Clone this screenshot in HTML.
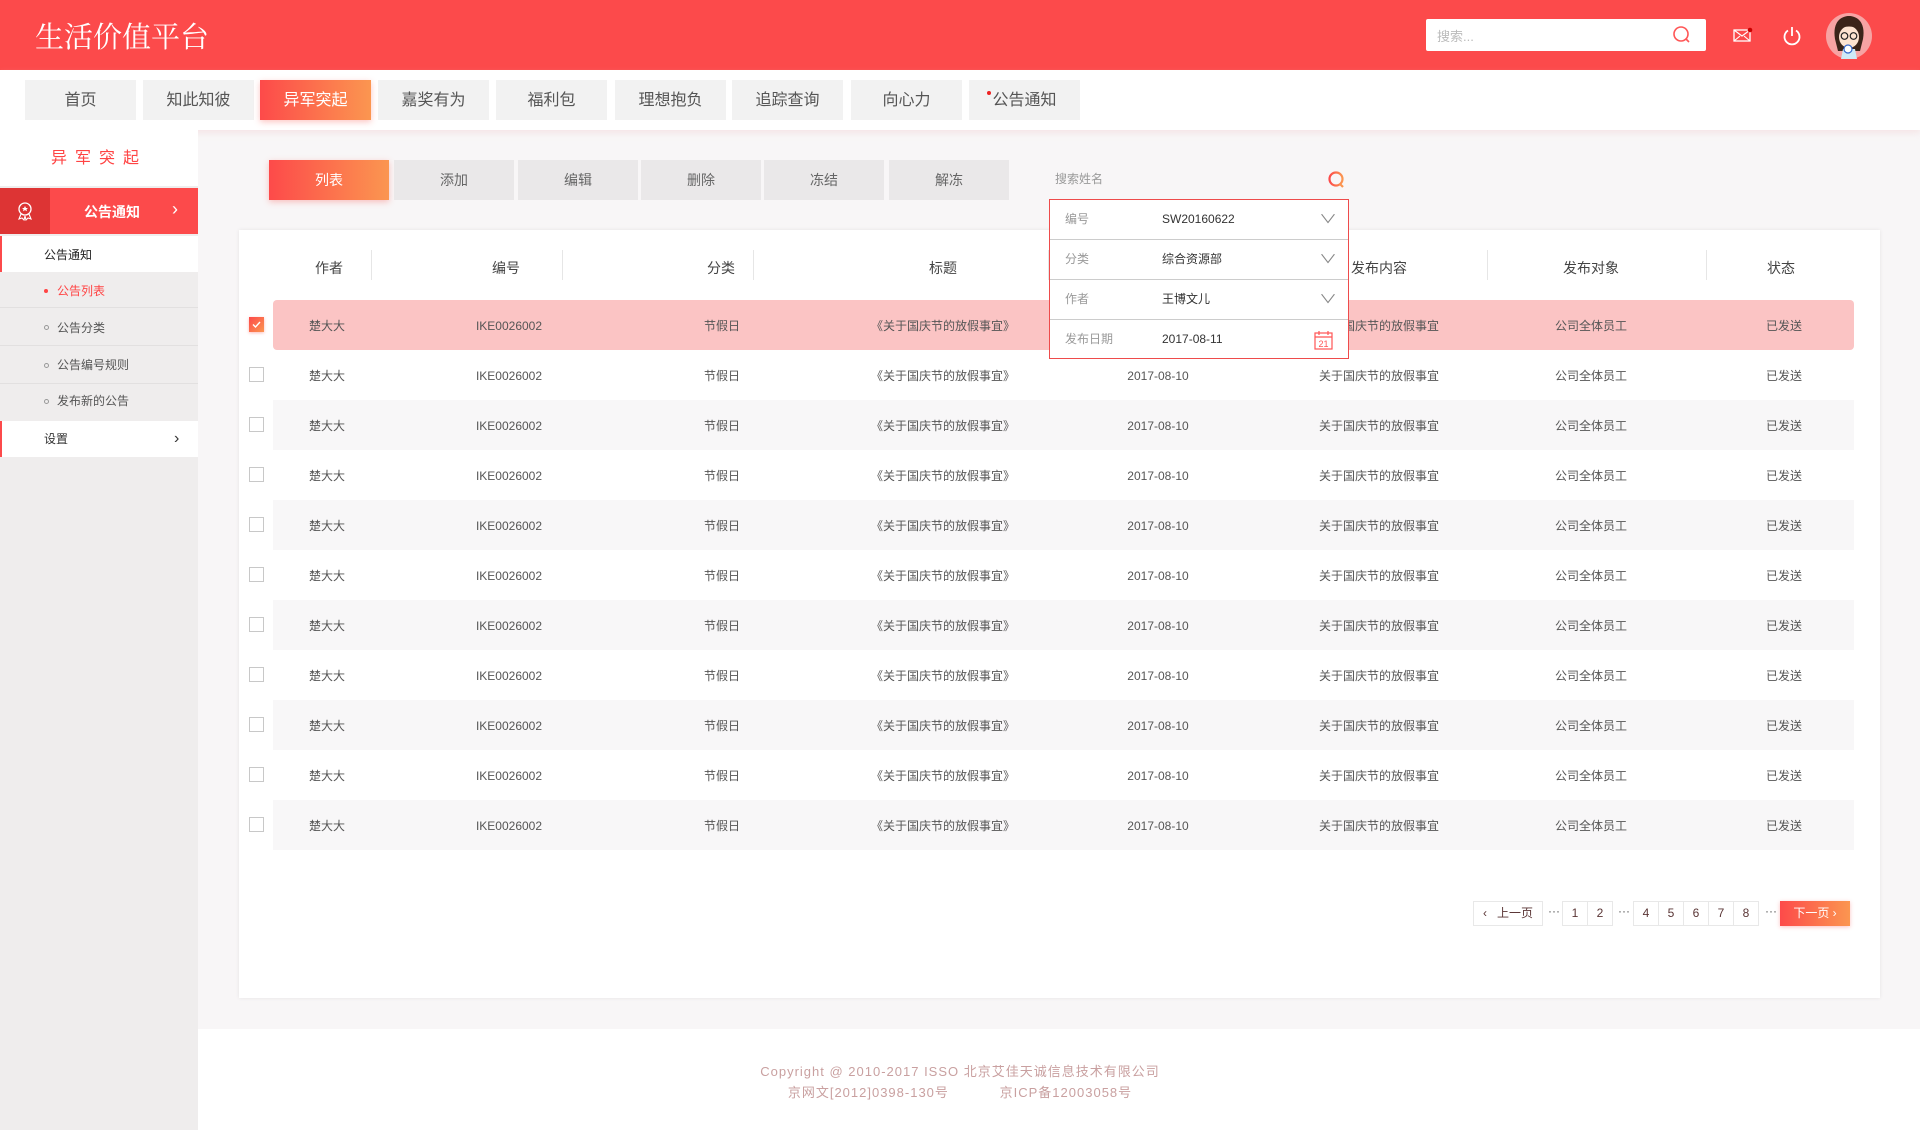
<!DOCTYPE html>
<html><head><meta charset="utf-8">
<style>
*{margin:0;padding:0;box-sizing:border-box}
body{width:1920px;height:1130px;position:relative;overflow:hidden;background:#f8f6f7;font-family:"Liberation Sans","Noto Sans CJK SC",sans-serif;color:#333}
.a{position:absolute}
.hdr{left:0;top:0;width:1920px;height:70px;background:#fc4a4b}
.logo{left:35px;top:15px;color:#fff;font-size:29px;font-family:"Noto Serif CJK SC","Noto Sans CJK SC",serif;letter-spacing:0}
.nav{left:0;top:70px;width:1920px;height:60px;background:#fff;box-shadow:0 3px 6px rgba(240,200,200,.35)}
.tab{top:10px;width:111px;height:40px;background:#f2f2f2;color:#555;font-size:16px;text-align:center;line-height:42px}
.grad{background:linear-gradient(90deg,#fd4a4a,#fb9650)!important;color:#fff!important}
.side{left:0;top:130px;width:198px;height:1000px;background:#efeded}
.si{left:0;width:198px;font-size:12px;color:#555;padding-left:44px}
.btn{top:160px;width:120px;height:40px;background:#eae8e9;color:#666;font-size:14px;text-align:center;line-height:40px}
.card{left:239px;top:230px;width:1641px;height:768px;background:#fff;box-shadow:0 0 4px rgba(0,0,0,.08)}
.th{top:258px;font-size:14px;color:#444;transform:translateX(-50%);white-space:nowrap}
.sep{top:250px;width:1px;height:30px;background:#e6e6e6}
.row{left:273px;width:1581px;height:50px}
.td{font-size:12px;color:#555;transform:translate(-50%,-50%);white-space:nowrap;line-height:16px}
.cb{left:249px;width:15px;height:15px;border:1px solid #c8c8c8;background:#fff}
.dd{left:1049px;top:199px;width:300px;height:160px;border:1px solid #ee4b4b;background:#fff}
.dr{left:0;width:298px;height:40px;border-bottom:1px solid #ccc;font-size:12px;line-height:39px}
.pg{top:901px;height:25px;border:1px solid #e8e8e8;background:#fff;font-size:12px;color:#5a3535;text-align:center;line-height:23px}
.dots{top:904px;font-size:12px;color:#555}
.foot{left:198px;top:1029px;width:1722px;height:101px;background:#fff}
.ft{left:0;width:1920px;text-align:center;font-size:13px;color:#c9a0a0;letter-spacing:1px}
</style></head><body>
<div class="a hdr"></div>
<div class="a logo">生活价值平台</div>
<div class="a" style="left:1426px;top:19px;width:280px;height:32px;background:#fff;border-radius:2px"></div>
<div class="a" style="left:1437px;top:26px;font-size:13px;color:#bbb">搜索...</div>
<svg class="a" style="left:1672px;top:25px" width="20" height="20" viewBox="0 0 20 20"><circle cx="9" cy="9" r="7" fill="none" stroke="#f55" stroke-width="1.6"/><path d="M14 14l3 3" stroke="#f55" stroke-width="1.6"/></svg>
<svg class="a" style="left:1733px;top:27px" width="20" height="16" viewBox="0 0 20 16"><rect x="1" y="3" width="16" height="11" fill="none" stroke="#fff" stroke-width="1.3"/><path d="M1 3l8 6 8-6M1 14l6-5M17 14l-6-5" fill="none" stroke="#fff" stroke-width="1.1"/><circle cx="17" cy="3" r="2.3" fill="#c00"/></svg>
<svg class="a" style="left:1781px;top:25px" width="22" height="22" viewBox="0 0 22 22"><path d="M7 5.5A7.5 7.5 0 1 0 15 5.5" fill="none" stroke="#fff" stroke-width="1.8"/><path d="M11 2v9" stroke="#fff" stroke-width="1.8"/></svg>
<svg class="a" style="left:1826px;top:13px" width="46" height="46" viewBox="0 0 46 46"><circle cx="23" cy="23" r="23" fill="#f7a3a3"/><path d="M9 26C6 8 16 3 23 3s17 5 14 23l-3 12H12z" fill="#3b2419"/><ellipse cx="23" cy="24" rx="10" ry="11" fill="#fde3d0"/><path d="M12 18c4-6 18-6 22 0v-4c-4-6-18-6-22 0z" fill="#3b2419"/><circle cx="18.5" cy="23" r="3.3" fill="none" stroke="#222" stroke-width="1.2"/><circle cx="27.5" cy="23" r="3.3" fill="none" stroke="#222" stroke-width="1.2"/><path d="M15 46l2-10h12l2 10z" fill="#cfe9f6"/><circle cx="22" cy="36" r="4" fill="#fff" stroke="#36c" stroke-width="1.2"/></svg>

<div class="a nav">
<div class="a tab" style="left:25px">首页</div>
<div class="a tab" style="left:143px">知此知彼</div>
<div class="a tab grad" style="left:260px;box-shadow:0 2px 6px rgba(250,90,80,.35)">异军突起</div>
<div class="a tab" style="left:378px">嘉奖有为</div>
<div class="a tab" style="left:496px">福利包</div>
<div class="a tab" style="left:615px">理想抱负</div>
<div class="a tab" style="left:732px">追踪查询</div>
<div class="a tab" style="left:851px">向心力</div>
<div class="a tab" style="left:969px">公告通知<span class="a" style="left:18px;top:11px;width:4px;height:4px;border-radius:50%;background:#e22"></span></div>
</div>

<div class="a side"></div>
<div class="a" style="left:0;top:130px;width:198px;height:56px;background:#fff;color:#f44;font-size:16px;text-align:center;line-height:58px;letter-spacing:8px">异军突起</div>
<div class="a" style="left:0;top:188px;width:198px;height:46px;background:#fc4a4b"></div>
<div class="a" style="left:0;top:188px;width:50px;height:46px;background:#dd3434"></div>
<svg class="a" style="left:16px;top:201px" width="18" height="20" viewBox="0 0 18 20"><circle cx="9" cy="8" r="6" fill="none" stroke="#fff" stroke-width="1.3"/><path d="M5 13l-2 5 3-1 2 2 1-4M13 13l2 5-3-1-2 2-1-4" fill="none" stroke="#fff" stroke-width="1.1"/><path d="M9 5l1 2h2l-1.5 1.3.5 2-2-1.2-2 1.2.5-2L6 7h2z" fill="#fff"/></svg>
<div class="a" style="left:84px;top:202px;color:#fff;font-size:14px;font-weight:bold">公告通知</div>
<div class="a" style="left:172px;top:199px;color:#fff;font-size:18px">›</div>
<div class="a" style="left:0;top:236px;width:198px;height:36px;background:#fff;border-left:2px solid #fc4a4b"></div>
<div class="a" style="left:44px;top:246px;font-size:12px;color:#222">公告通知</div>
<div class="a si" style="top:273px;height:35px;line-height:37px;color:#f44;border-bottom:1px solid #e2e0e0"><span style="position:absolute;left:44px;top:16px;width:4px;height:4px;border-radius:50%;background:#f44"></span><span style="margin-left:13px">公告列表</span></div>
<div class="a si" style="top:309px;height:37px;line-height:38px;border-bottom:1px solid #e2e0e0"><span style="position:absolute;left:44px;top:16px;width:5px;height:5px;border-radius:50%;border:1px solid #999"></span><span style="margin-left:13px">公告分类</span></div>
<div class="a si" style="top:347px;height:37px;line-height:36px;border-bottom:1px solid #e2e0e0"><span style="position:absolute;left:44px;top:16px;width:5px;height:5px;border-radius:50%;border:1px solid #999"></span><span style="margin-left:13px">公告编号规则</span></div>
<div class="a si" style="top:384px;height:36px;line-height:34px"><span style="position:absolute;left:44px;top:15px;width:5px;height:5px;border-radius:50%;border:1px solid #999"></span><span style="margin-left:13px">发布新的公告</span></div>
<div class="a" style="left:0;top:421px;width:198px;height:36px;background:#fff;border-left:2px solid #fc4a4b;font-size:12px;line-height:36px;padding-left:42px;color:#333">设置<span style="position:absolute;left:172px;top:0;font-size:16px">›</span></div>

<div class="a btn grad" style="left:269px;box-shadow:0 2px 6px rgba(250,90,80,.35)">列表</div>
<div class="a btn" style="left:394px">添加</div>
<div class="a btn" style="left:518px">编辑</div>
<div class="a btn" style="left:641px">删除</div>
<div class="a btn" style="left:764px">冻结</div>
<div class="a btn" style="left:889px">解冻</div>
<div class="a" style="left:1055px;top:170px;font-size:12px;color:#999">搜索姓名</div>
<svg class="a" style="left:1327px;top:170px" width="20" height="20" viewBox="0 0 20 20"><defs><linearGradient id="g" x1="0" x2="1"><stop offset="0" stop-color="#fc4a4a"/><stop offset="1" stop-color="#fb9650"/></linearGradient></defs><circle cx="9" cy="9" r="6.5" fill="none" stroke="url(#g)" stroke-width="2.2"/><path d="M13 14l3 3" stroke="#fb9650" stroke-width="2.2"/></svg>

<div class="a card"></div>
<div class="a sep" style="left:371px"></div><div class="a sep" style="left:562px"></div><div class="a sep" style="left:753px"></div><div class="a sep" style="left:1048px"></div><div class="a sep" style="left:1487px"></div><div class="a sep" style="left:1706px"></div>
<div class="a th" style="left:329px">作者</div><div class="a th" style="left:506px">编号</div><div class="a th" style="left:721px">分类</div><div class="a th" style="left:943px">标题</div><div class="a th" style="left:1379px">发布内容</div><div class="a th" style="left:1591px">发布对象</div><div class="a th" style="left:1781px">状态</div>

<div id="rows"></div>
<script>
var h='';
for(var i=0;i<11;i++){
 var y=300+i*50;
 var bg=i==0?'#fbc4c4':(i%2==0?'#f8f7f8':'#fff');
 h+='<div class="a row" style="top:'+y+'px;background:'+bg+';'+(i==0?'border-radius:4px':'')+'"></div>';
 if(i==0)h+='<div class="a cb" style="top:317px;border:none;background:linear-gradient(135deg,#fc4a4a,#fb9650);box-shadow:0 1px 3px rgba(250,80,80,.4)"><svg width="15" height="15" viewBox="0 0 15 15" style="display:block"><path d="M4 7.5l2.5 2.5 4.5-5" fill="none" stroke="#fff" stroke-width="1.4"/></svg></div>';
 else h+='<div class="a cb" style="top:'+(y+17)+'px"></div>';
 var ty=y+26;
 var c=[[327,'楚大大'],[509,'IKE0026002'],[722,'节假日'],[943,'《关于国庆节的放假事宜》'],[1158,'2017-08-10'],[1379,'关于国庆节的放假事宜'],[1591,'公司全体员工'],[1784,'已发送']];
 for(var j=0;j<c.length;j++)h+='<div class="a td" style="left:'+c[j][0]+'px;top:'+ty+'px">'+c[j][1]+'</div>';
}
document.getElementById('rows').innerHTML=h;
</script>

<div class="a dd">
<div class="a dr" style="top:0"><span class="a" style="left:15px;color:#999">编号</span><span class="a" style="left:112px;color:#333">SW20160622</span><span class="a" style="left:272px;color:#888;transform:scaleX(1.5)">∨</span></div>
<div class="a dr" style="top:40px"><span class="a" style="left:15px;color:#999">分类</span><span class="a" style="left:112px;color:#333">综合资源部</span><span class="a" style="left:272px;color:#888;transform:scaleX(1.5)">∨</span></div>
<div class="a dr" style="top:80px"><span class="a" style="left:15px;color:#999">作者</span><span class="a" style="left:112px;color:#333">王博文儿</span><span class="a" style="left:272px;color:#888;transform:scaleX(1.5)">∨</span></div>
<div class="a dr" style="top:120px;border:none"><span class="a" style="left:15px;color:#999">发布日期</span><span class="a" style="left:112px;color:#333">2017-08-11</span>
<svg class="a" style="left:264px;top:10px" width="19" height="20" viewBox="0 0 19 20"><rect x="1" y="3" width="17" height="16" fill="none" stroke="#f55" stroke-width="1.2"/><path d="M1 7h17M5 1v4M14 1v4" stroke="#f55" stroke-width="1.2"/><text x="9.5" y="17" font-size="9" fill="#f55" text-anchor="middle" font-family="Liberation Sans">21</text></svg></div>
</div>

<div class="a pg" style="left:1473px;width:70px"><span style="margin-right:10px">‹</span>上一页</div>
<div class="a dots" style="left:1548px">···</div>
<div class="a pg" style="left:1562px;width:26px">1</div><div class="a pg" style="left:1587px;width:26px">2</div>
<div class="a dots" style="left:1618px">···</div>
<div class="a pg" style="left:1633px;width:26px">4</div><div class="a pg" style="left:1658px;width:26px">5</div><div class="a pg" style="left:1683px;width:26px">6</div><div class="a pg" style="left:1708px;width:26px">7</div><div class="a pg" style="left:1733px;width:26px">8</div>
<div class="a dots" style="left:1765px">···</div>
<div class="a pg grad" style="left:1780px;width:70px;border:none;line-height:25px;box-shadow:0 1px 4px rgba(250,80,80,.35)">下一页 ›</div>

<div class="a foot"></div>
<div class="a ft" style="top:1061px">Copyright @ 2010-2017 ISSO 北京艾佳天诚信息技术有限公司</div>
<div class="a ft" style="top:1082px">京网文[2012]0398-130号&nbsp;&nbsp;&nbsp;&nbsp;&nbsp;&nbsp;&nbsp;&nbsp;&nbsp;&nbsp;&nbsp;京ICP备12003058号</div>
</body></html>
